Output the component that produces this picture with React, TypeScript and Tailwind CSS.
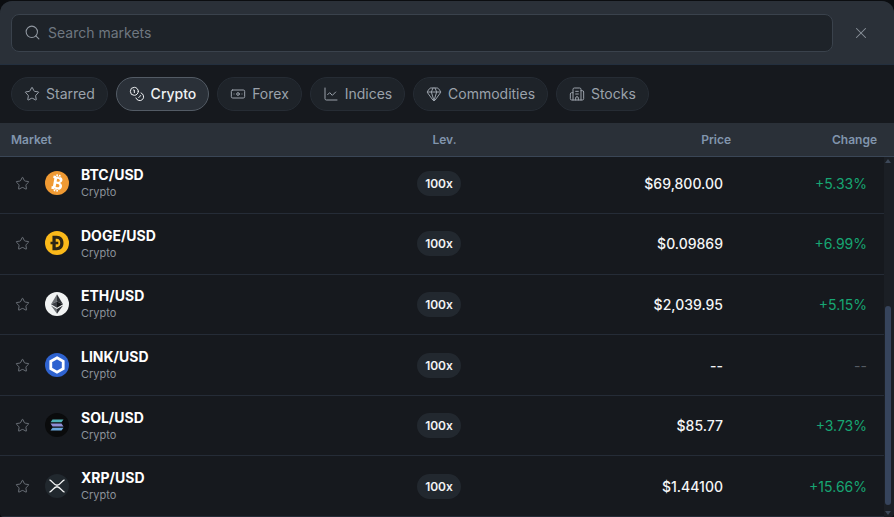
import { Search, X, Star, Coins, Banknote, ChartLine, Gem, Building2 } from "lucide-react";
import type { ReactNode } from "react";

const tabs = [
  { label: "Starred", Icon: Star },
  { label: "Crypto", Icon: Coins, active: true },
  { label: "Forex", Icon: Banknote },
  { label: "Indices", Icon: ChartLine },
  { label: "Commodities", Icon: Gem },
  { label: "Stocks", Icon: Building2 },
];

const Btc = () => (
  <svg viewBox="0 0 24 24" className="h-6 w-6">
    <circle cx="12" cy="12" r="12" fill="#f09a33" />
    <g transform="translate(12 12) rotate(10) scale(1.32) translate(-12.500 -12)">
      <path
        d="M9 6.800h4.200c1.900 0 3 1 3 2.500 0 1.100-.6 1.900-1.500 2.300 1.200.3 2 1.200 2 2.500 0 1.800-1.300 2.900-3.400 2.900H9v-2h.9V8.800H9zM12 8.800v2.100h1c.8 0 1.300-.4 1.300-1s-.5-1.100-1.300-1.100zm0 3.900v2.400h1.300c.9 0 1.400-.5 1.400-1.200s-.5-1.200-1.400-1.200zM11 5.500h1.200v2H11zm2 0h1.200v2H13zm-2 11h1.200v2H11zm2 0h1.200v2H13z"
        fill="#fff"
        fillRule="evenodd"
      />
    </g>
  </svg>
);

const Doge = () => (
  <svg viewBox="0 0 24 24" className="h-6 w-6">
    <circle cx="12" cy="12" r="12" fill="#fbb91a" />
    <g transform="translate(12 12) scale(1.3) translate(-13 -12)">
      <path
        d="M9.500 6.500h3.300c3.300 0 5.200 2.200 5.200 5.500s-1.900 5.500-5.200 5.500H9.500v-4.500H8v-2h1.500zM12 8.800v2.200h2v2h-2v2.200h.8c1.800 0 2.700-1.300 2.700-3.200s-.9-3.200-2.700-3.200z"
        fill="#2b2416"
        fillRule="evenodd"
      />
    </g>
  </svg>
);

const Eth = () => (
  <svg viewBox="0 0 24 24" className="h-6 w-6">
    <circle cx="12" cy="12" r="12" fill="#f1f3f3" />
    <g transform="translate(12 12) scale(1.15) translate(-12 -12)">
      <path d="M12 3.500v6.300l-5.200 2.400z" fill="#6b6f73" />
      <path d="M12 3.500v6.300l5.200 2.400z" fill="#2e3136" />
      <path d="M12 9.800l-5.200 2.400L12 15.200z" fill="#3b3e44" />
      <path d="M12 9.800l5.200 2.400L12 15.200z" fill="#15171a" />
      <path d="M6.800 13.200L12 20.500v-4.200z" fill="#6b6f73" />
      <path d="M17.200 13.200L12 20.500v-4.200z" fill="#2e3136" />
    </g>
  </svg>
);

const Link = () => (
  <svg viewBox="0 0 24 24" className="h-6 w-6">
    <circle cx="12" cy="12" r="12" fill="#2f63d0" />
    <path d="M12 4.800l6.200 3.600v7.200L12 19.200l-6.200-3.600V8.400z" fill="none" stroke="#fff" strokeWidth="2.800" />
  </svg>
);

const Sol = () => (
  <svg viewBox="0 0 24 24" className="h-6 w-6">
    <circle cx="12" cy="12" r="12" fill="#0a0b0c" />
    <path d="M7.500 6.500h11l-2 2.800h-11z" fill="#4fb3b8" />
    <path d="M5.500 10.600h11l2 2.800h-11z" fill="#8f8fd6" />
    <path d="M7.500 14.700h11l-2 2.800h-11z" fill="#6aa7dc" />
  </svg>
);

const Xrp = () => (
  <svg viewBox="0 0 24 24" className="h-6 w-6">
    <circle cx="12" cy="12" r="12" fill="#21282e" />
    <path
      d="M4.500 6c2.400 0 4.200 5.300 7.500 5.300S17.100 6 19.500 6M4.500 18c2.400 0 4.200-5.300 7.500-5.300s5.100 5.300 7.500 5.300"
      fill="none"
      stroke="#f4f5f5"
      strokeWidth="1.400"
    />
  </svg>
);

const rows: { name: string; logo: ReactNode; price: string; change: string }[] = [
  { name: "BTC/USD", logo: <Btc />, price: "$69,800.00", change: "+5.33%" },
  { name: "DOGE/USD", logo: <Doge />, price: "$0.09869", change: "+6.99%" },
  { name: "ETH/USD", logo: <Eth />, price: "$2,039.95", change: "+5.15%" },
  { name: "LINK/USD", logo: <Link />, price: "--", change: "--" },
  { name: "SOL/USD", logo: <Sol />, price: "$85.77", change: "+3.73%" },
  { name: "XRP/USD", logo: <Xrp />, price: "$1.44100", change: "+15.66%" },
];

export default function App() {
  return (
    <div className="h-[517px] w-[894px] overflow-hidden bg-[#0b0d10] font-['Inter',sans-serif]">
      <div className="mt-px flex h-[516px] flex-col overflow-hidden rounded-t-xl rounded-b-sm bg-[#16191e]">
        <div className="flex h-[64px] shrink-0 items-center border-b border-[#232f3e] bg-[#2a3038] pl-[11px]">
          <div className="flex h-[38px] w-[822px] shrink-0 items-center gap-[7px] rounded-lg border border-[#3a424c] bg-[#1e2329] pl-[12px]">
            <Search size={17} strokeWidth={1.5} className="text-[#9198a1]" />
            <span className="text-[14px] text-[#6f7780]">Search markets</span>
          </div>
          <X size={18} strokeWidth={1.4} className="ml-[19px] shrink-0 text-[#8a929b]" />
        </div>

        <div className="flex h-[58px] shrink-0 items-center gap-2 pl-[11px]">
          {tabs.map(({ label, Icon, active }) => (
            <div
              key={label}
              className={
                active
                  ? "flex h-[34px] items-center gap-1.5 rounded-full border border-[#535b65] bg-[#2a3038] pl-3 pr-[11.85px] text-[14px] leading-[30px] font-medium text-[#eef0f2]"
                  : "flex h-[34px] items-center gap-1.5 rounded-full border border-[#262c34] bg-[#1e2329] pl-3 pr-[11.85px] text-[14px] leading-[30px] text-[#9ba2ab]"
              }
            >
              <Icon size={16} strokeWidth={1.5} />
              <span>{label}</span>
            </div>
          ))}
        </div>

        <div className="grid h-[34px] shrink-0 grid-cols-[335px_110.5px_274.5px_146px] items-center border-b border-[#3a4656] bg-[#2a3038] pl-[11px] text-[12px] font-semibold text-[#8195ad]">
          <span>Market</span>
          <span className="text-right">Lev.</span>
          <span className="text-right">Price</span>
          <span className="text-right">Change</span>
        </div>

        <div className="relative min-h-0 flex-1 overflow-hidden">
          <div className="-mt-[3.8px] w-[884px]">
            {rows.map((r) => (
              <div
                key={r.name}
                className="grid h-[60.67px] grid-cols-[30px_36px_336px_44px_262px_144px] items-center border-b border-[#252c37] pl-[15px]"
              >
                <Star size={15} strokeWidth={1.3} className="text-[#7d838b]" />
                <div className="-mt-px">{r.logo}</div>
                <div className="flex flex-col">
                  <span className="text-[14px] leading-[18px] font-bold text-white">{r.name}</span>
                  <span className="mt-px text-[11px] leading-[15px] text-[#8c929a]">Crypto</span>
                </div>
                <div className="flex justify-center">
                  <span className="flex h-[25px] w-[44px] items-center justify-center rounded-full bg-[#22282f] pt-px text-[12px] font-semibold text-[#f2f3f5]">
                    100x
                  </span>
                </div>
                <span className="text-right text-[14px] font-medium text-[#f4f5f6]">{r.price}</span>
                <span
                  className={
                    r.change === "--"
                      ? "text-right text-[14px] text-[#555b63]"
                      : "text-right text-[14px] text-[#17a673]"
                  }
                >
                  {r.change}
                </span>
              </div>
            ))}
          </div>
          <div className="absolute right-0 top-0 h-full w-[10px] bg-[#1b1f25]">
            <div className="absolute left-[1px] top-[2px] h-0 w-0 border-x-[3px] border-b-[4px] border-x-transparent border-b-[#3d4859]" />
            <div className="absolute left-[1px] top-[149px] h-[199px] w-[6px] rounded-full bg-[#36445c]" />
            <div className="absolute bottom-[2px] left-[1px] h-0 w-0 border-x-[3px] border-t-[4px] border-x-transparent border-t-[#3d4859]" />
          </div>
        </div>
      </div>
    </div>
  );
}
